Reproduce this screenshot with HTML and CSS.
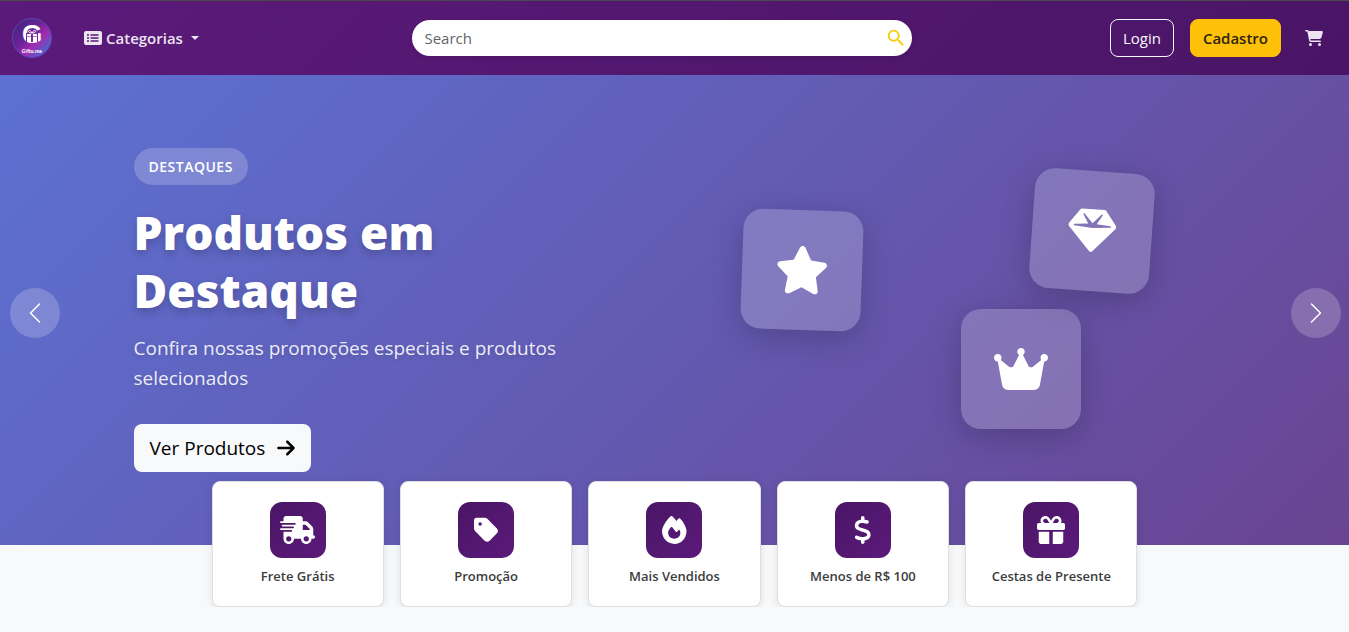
FILE: index.html
```html
<!DOCTYPE html>
<html lang="pt-BR">
<head>
    <meta charset="UTF-8">
    <meta name="viewport" content="width=device-width, initial-scale=1.0">
    <title>Giftu.me</title>
    <link rel="stylesheet" href="styles.css">
</head>
<body>

<header class="navbar">
    <div class="nav-left">
        <a href="#" class="brand" aria-label="Giftu.me">
            <svg viewBox="0 0 40 40" class="logo">
                <defs>
                    <linearGradient id="logoBg" x1="0.1" y1="0.1" x2="0.9" y2="0.9">
                        <stop offset="0" stop-color="#45217f"/>
                        <stop offset="0.4" stop-color="#6a2396"/>
                        <stop offset="0.65" stop-color="#a32cb0"/>
                        <stop offset="0.85" stop-color="#6652c4"/>
                        <stop offset="1" stop-color="#4b6fd6"/>
                    </linearGradient>
                </defs>
                <circle cx="20" cy="20" r="19.5" fill="url(#logoBg)" stroke="#5a48b4"/>
                <text x="20" y="25" class="logo-letter">G</text>
                <!-- gift inside the letter -->
                <path d="M14 15h12v9H14z" fill="#7b2a9f"/>
                <path d="M15 16h4v8h-4zM21 16h4v8h-4z" fill="#fff"/>
                <path d="M15 18.500h10" stroke="#7b2a9f" stroke-width="0.6"/>
                <path d="M20 15c-1-3-4-3-3.500-1.200.2.800 2 1.200 3.500 1.200zM20 15c1-3 4-3 3.500-1.200-.2.800-2 1.200-3.500 1.200z" fill="none" stroke="#fff" stroke-width="1"/>
                <text x="20" y="35" class="logo-name">Giftu.me</text>
            </svg>
        </a>
        <button type="button" class="categories">
            <svg viewBox="0 0 576 512" class="icon-list"><path fill-rule="evenodd" d="M0 96C0 60.700 28.700 32 64 32H512c35.300 0 64 28.700 64 64V416c0 35.300-28.700 64-64 64H64c-35.300 0-64-28.700-64-64V96zM128 288a32 32 0 1 0 0-64 32 32 0 1 0 0 64zm32-128a32 32 0 1 0-64 0 32 32 0 1 0 64 0zM128 384a32 32 0 1 0 0-64 32 32 0 1 0 0 64zm96-248c-13.300 0-24 10.700-24 24s10.700 24 24 24H448c13.300 0 24-10.700 24-24s-10.700-24-24-24H224zm0 96c-13.300 0-24 10.700-24 24s10.700 24 24 24H448c13.300 0 24-10.700 24-24s-10.700-24-24-24H224zm0 96c-13.300 0-24 10.700-24 24s10.700 24 24 24H448c13.300 0 24-10.700 24-24s-10.700-24-24-24H224z"/></svg>
            <span>Categorias</span>
            <span class="caret"></span>
        </button>
    </div>

    <form class="search" role="search">
        <input type="search" class="search-input" placeholder="Search" aria-label="Search">
        <button type="submit" class="search-button" aria-label="Buscar">
            <svg viewBox="0 0 24 24" class="icon-search"><path d="M15.500 14h-.790l-.280-.270A6.471 6.471 0 0 0 16 9.500 6.500 6.500 0 1 0 9.500 16c1.610 0 3.090-.590 4.230-1.570l.270.280v.790l5 4.990L20.490 19l-4.990-5zm-6 0C7.010 14 5 11.990 5 9.500S7.010 5 9.500 5 14 7.010 14 9.500 11.990 14 9.500 14z"/></svg>
        </button>
    </form>

    <nav class="nav-right">
        <a href="#" class="btn btn-outline">Login</a>
        <a href="#" class="btn btn-warning">Cadastro</a>
        <a href="#" class="cart" aria-label="Carrinho">
            <svg viewBox="0 0 576 512" class="icon-cart"><path d="M0 24C0 10.700 10.700 0 24 0H69.500c22 0 41.500 12.800 50.600 32h411c26.300 0 45.500 25 38.600 50.400l-41 152.300c-8.500 31.400-37 53.300-69.500 53.300H170.700l5.400 28.500c2.200 11.300 12.100 19.500 23.600 19.500H488c13.300 0 24 10.700 24 24s-10.700 24-24 24H199.700c-34.600 0-64.300-24.600-70.700-58.500L77.400 54.500c-.7-3.800-4-6.500-7.900-6.500H24C10.700 48 0 37.300 0 24zM128 464a48 48 0 1 1 96 0 48 48 0 1 1-96 0zm336-48a48 48 0 1 1 0 96 48 48 0 1 1 0-96z"/></svg>
        </a>
    </nav>
</header>

<section class="hero">
    <button type="button" class="slide-button slide-prev" aria-label="Anterior">
        <svg viewBox="0 0 16 16" class="icon-chevron"><path d="M11.354 1.646a.5.5 0 0 1 0 .708L5.707 8l5.647 5.646a.5.5 0 0 1-.708.708l-6-6a.5.5 0 0 1 0-.708l6-6a.5.5 0 0 1 .708 0z"/></svg>
    </button>

    <div class="hero-container">
        <div class="hero-text">
            <span class="badge">DESTAQUES</span>
            <h1>Produtos em Destaque</h1>
            <p>Confira nossas promoções especiais e produtos selecionados</p>
            <a href="#" class="hero-button">
                Ver Produtos
                <svg viewBox="0 0 448 512" class="icon-arrow"><path d="M438.600 278.600c12.500-12.500 12.500-32.800 0-45.300l-160-160c-12.500-12.500-32.800-12.500-45.300 0s-12.500 32.800 0 45.300L338.800 224 32 224c-17.700 0-32 14.300-32 32s14.300 32 32 32l306.700 0L233.400 393.400c-12.500 12.500-12.500 32.800 0 45.300s32.800 12.500 45.300 0l160-160z"/></svg>
            </a>
        </div>
        <div class="hero-art">
            <div class="floating floating-star">
                <svg viewBox="0 0 576 512"><path d="M316.900 18C311.600 7 300.400 0 288.100 0s-23.400 7-28.800 18L195 150.300 51.400 171.500c-12 1.800-22 10.200-25.700 21.700s-.7 24.200 7.900 32.700L137.800 329 113.200 474.700c-2 12 3 24.200 12.900 31.300s23 8 33.800 2.300l128.300-68.500 128.300 68.500c10.800 5.700 23.900 4.900 33.800-2.300s14.900-19.300 12.900-31.300L438.500 329 542.700 225.900c8.600-8.500 11.700-21.200 7.900-32.700s-13.700-19.900-25.700-21.700L381.200 150.300 316.900 18z"/></svg>
            </div>
            <div class="floating floating-gem">
                <svg viewBox="0 0 512 512"><path d="M116.700 33.800c4.500-6.100 11.700-9.800 19.300-9.800H376c7.600 0 14.800 3.600 19.300 9.800l112 152c6.800 9.200 6.100 21.900-1.500 30.400l-232 256c-4.500 5-11 7.900-17.800 7.900s-13.200-2.900-17.800-7.900l-232-256c-7.700-8.500-8.300-21.200-1.500-30.400l112-152zm38.500 39.800c-3.300 2.500-4.200 7-2.100 10.500l57.400 95.600L63.300 192c-4.100.3-7.300 3.800-7.300 8s3.200 7.600 7.300 8l192 16c.4 0 .9 0 1.300 0l192-16c4.100-.3 7.300-3.800 7.300-8s-3.200-7.600-7.300-8L301.500 179.800l57.400-95.600c2.100-3.500 1.200-8.100-2.100-10.500s-7.900-2-10.700 1L256 172.200 165.900 74.600c-2.800-3-7.400-3.400-10.700-1z"/></svg>
            </div>
            <div class="floating floating-crown">
                <svg viewBox="0 0 576 512"><path d="M309 106c11.400-7 19-19.700 19-34c0-22.100-17.900-40-40-40s-40 17.900-40 40c0 14.400 7.600 27 19 34L209.700 220.600c-9.100 18.200-32.700 23.400-48.600 10.700L72 160c5-6.700 8-15 8-24c0-22.100-17.900-40-40-40S0 113.900 0 136s17.900 40 40 40c.2 0 .5 0 .7 0L86.400 427.400c5.500 30.400 32 52.600 63 52.600H426.600c30.900 0 57.400-22.100 63-52.600L535.300 176c.2 0 .5 0 .7 0c22.100 0 40-17.900 40-40s-17.900-40-40-40s-40 17.900-40 40c0 9 3 17.300 8 24l-89.100 71.300c-15.900 12.700-39.500 7.500-48.600-10.700L309 106z"/></svg>
            </div>
        </div>
    </div>

    <button type="button" class="slide-button slide-next" aria-label="Próximo">
        <svg viewBox="0 0 16 16" class="icon-chevron"><path d="M4.646 1.646a.5.5 0 0 1 .708 0l6 6a.5.5 0 0 1 0 .708l-6 6a.5.5 0 0 1-.708-.708L10.293 8 4.646 2.354a.5.5 0 0 1 0-.708z"/></svg>
    </button>
</section>

<section class="shortcuts">
    <a href="#" class="shortcut">
        <span class="shortcut-icon">
            <svg viewBox="0 0 640 512"><path d="M112 0C85.500 0 64 21.500 64 48V96H16c-8.800 0-16 7.200-16 16s7.200 16 16 16H64 272c8.800 0 16 7.200 16 16s-7.200 16-16 16H64 48c-8.800 0-16 7.200-16 16s7.200 16 16 16H64 240c8.800 0 16 7.200 16 16s-7.200 16-16 16H64 16c-8.800 0-16 7.200-16 16s7.200 16 16 16H64 208c8.800 0 16 7.200 16 16s-7.200 16-16 16H64V416c0 53 43 96 96 96s96-43 96-96H384c0 53 43 96 96 96s96-43 96-96h32c17.700 0 32-14.300 32-32s-14.300-32-32-32V288 256 237.300c0-17-6.700-33.300-18.700-45.300L512 114.700c-12-12-28.300-18.700-45.300-18.700H416V48c0-26.500-21.500-48-48-48H112zM544 237.300V256H416V160h50.700L544 237.300zM160 368a48 48 0 1 1 0 96 48 48 0 1 1 0-96zm272 48a48 48 0 1 1 96 0 48 48 0 1 1-96 0z"/></svg>
        </span>
        <span class="shortcut-label">Frete Grátis</span>
    </a>
    <a href="#" class="shortcut">
        <span class="shortcut-icon">
            <svg viewBox="0 0 448 512"><path d="M0 80V229.500c0 17 6.700 33.300 18.700 45.300l176 176c25 25 65.500 25 90.500 0L418.700 317.300c25-25 25-65.500 0-90.500l-176-176c-12-12-28.300-18.700-45.300-18.700H48C21.500 32 0 53.500 0 80zm112 32a32 32 0 1 1 0 64 32 32 0 1 1 0-64z"/></svg>
        </span>
        <span class="shortcut-label">Promoção</span>
    </a>
    <a href="#" class="shortcut">
        <span class="shortcut-icon">
            <svg viewBox="0 0 448 512"><path d="M159.300 5.400c7.800-7.300 19.900-7.200 27.700.1c27.600 25.900 53.500 53.800 77.700 84c11-14.400 23.500-30.100 37-42.900c7.900-7.400 20.100-7.400 28 .1c34.600 33 63.900 76.600 84.500 118c20.300 40.800 33.800 82.500 33.800 111.900C448 404.200 348.200 512 224 512C98.400 512 0 404.100 0 276.500c0-38.400 17.800-85.300 45.400-131.700C73.300 97.700 112.700 48.600 159.300 5.400zM225.700 416c25.300 0 47.700-7 68.800-21c42.100-29.400 53.400-88.200 28.100-134.400c-4.500-9-16-9.600-22.500-2l-25.200 29.300c-6.600 7.600-18.500 7.400-24.700-.5c-16.500-21-46-58.500-62.800-79.800c-6.300-8-18.300-8.100-24.700-.1c-33.800 42.500-50.800 69.300-50.800 99.400C112 375.400 162.600 416 225.700 416z"/></svg>
        </span>
        <span class="shortcut-label">Mais Vendidos</span>
    </a>
    <a href="#" class="shortcut">
        <span class="shortcut-icon">
            <svg viewBox="0 0 320 512"><path d="M160 0c17.700 0 32 14.300 32 32V67.700c1.600.2 3.100.4 4.700.7c.4.1.7.1 1.100.2l48 8.800c17.400 3.200 28.900 19.900 25.700 37.200s-19.900 28.900-37.200 25.700l-47.500-8.700c-31.300-4.600-58.900-1.500-78.300 6.200s-27.200 18.300-29 28.100c-2 10.700-.5 16.700 1.200 20.400c1.800 3.900 5.500 8.300 12.800 13.200c16.300 10.700 41.300 17.700 73.700 26.300l2.900.8c28.600 7.600 63.600 16.800 89.600 33.800c14.200 9.300 27.600 21.900 35.900 39.500c8.500 17.900 10.300 37.900 6.400 59.200c-6.900 38-33.100 63.400-65.600 76.700c-13.700 5.600-28.600 9.200-44.400 11V480c0 17.700-14.300 32-32 32s-32-14.300-32-32V445.100c-.4-.1-.9-.1-1.300-.2l-.2 0c-24.400-3.800-64.500-14.300-91.500-26.300c-16.100-7.200-23.400-26.100-16.200-42.200s26.100-23.400 42.200-16.200c20.900 9.300 55.300 18.500 75.200 21.600c31.900 4.700 58.200 2 76-5.300c16.900-6.900 24.600-16.900 26.800-28.900c1.900-10.600.4-16.700-1.300-20.400c-1.900-4-5.600-8.400-13-13.300c-16.400-10.700-41.500-17.700-74-26.300l-2.800-.7C119.400 279.300 84.400 270 58.400 253c-14.200-9.300-27.500-22-35.800-39.600c-8.400-17.900-10.100-37.900-6.100-59.200C23.700 116 52.300 91.200 84.800 78.300c13.300-5.300 27.900-8.900 43.200-11V32c0-17.700 14.300-32 32-32z"/></svg>
        </span>
        <span class="shortcut-label">Menos de R$ 100</span>
    </a>
    <a href="#" class="shortcut">
        <span class="shortcut-icon">
            <svg viewBox="0 0 512 512"><path d="M190.500 68.800L225.300 128H224 152c-22.100 0-40-17.900-40-40s17.900-40 40-40h2.200c14.900 0 28.800 7.900 36.300 20.800zM64 88c0 14.400 3.500 28 9.600 40H32c-17.700 0-32 14.300-32 32v64c0 17.700 14.300 32 32 32H480c17.700 0 32-14.300 32-32V160c0-17.700-14.300-32-32-32H438.400c6.100-12 9.600-25.600 9.600-40c0-48.600-39.400-88-88-88h-2.200c-31.900 0-61.500 16.900-77.700 44.400L256 85.500l-24.100-41C215.700 16.900 186.100 0 154.200 0H152C103.400 0 64 39.400 64 88zm336 0c0 22.100-17.900 40-40 40H288h-1.300l34.800-59.200C329.100 55.900 342.900 48 357.800 48H360c22.100 0 40 17.900 40 40zM32 288V464c0 26.500 21.500 48 48 48H224V288H32zM288 512H432c26.500 0 48-21.500 48-48V288H288V512z"/></svg>
        </span>
        <span class="shortcut-label">Cestas de Presente</span>
    </a>
</section>

</body>
</html>
```
FILE: styles.css
```css
/* General styling */
* {
    box-sizing: border-box;
}

body {
    margin: 0;
    font-family: "Segoe UI", "Open Sans", sans-serif;
    font-size: 15px;
    line-height: 24px;
    color: #212529;
    background-color: #f8f9fb;
}

a {
    text-decoration: none;
    color: inherit;
}

button {
    font: inherit;
    border: none;
    padding: 0;
    background: none;
    cursor: pointer;
}

svg {
    display: block;
    fill: currentColor;
}

/* Navbar */
.navbar {
    display: flex;
    align-items: center;
    justify-content: space-between;
    padding: 17px 12px;
    border-top: 1px solid #4a4a4a;
    background: linear-gradient(135deg, #5b1a7a, #4a1566);
}

.nav-left,
.nav-right {
    display: flex;
    align-items: center;
    gap: 16px;
}

.logo {
    width: 40px;
    height: 40px;
}

.logo-letter {
    font-family: "Liberation Sans", Arial, sans-serif;
    font-size: 26px;
    font-weight: bold;
    text-anchor: middle;
    fill: #fff;
}

.logo-name {
    font-family: "Liberation Sans", Arial, sans-serif;
    font-size: 5px;
    font-weight: bold;
    line-height: 5px;
    text-anchor: middle;
    fill: #fff;
}

.categories {
    display: flex;
    align-items: center;
    gap: 4px;
    padding: 7px 16px;
    font-weight: 600;
    color: #ece4f0;
}

.icon-list {
    width: 18px;
    height: 16px;
}

.caret {
    margin-left: 4px;
    border-top: 4px solid;
    border-left: 4px solid transparent;
    border-right: 4px solid transparent;
}

.search {
    display: flex;
    align-items: center;
    flex: 0 1 500px;
    height: 36px;
    padding: 0 5px 0 12px;
    border-radius: 18px;
    background-color: #fff;
    box-shadow: 0 2px 5px rgba(0, 0, 0, 0.1);
}

.search-input {
    flex: 1;
    min-width: 0;
    padding: 0;
    border: none;
    outline: none;
    background: none;
    font: inherit;
}

.search-input::placeholder {
    color: #5f656b;
    opacity: 1;
}

.search-button {
    color: #f8cc0a;
}

.icon-search {
    width: 22px;
    height: 22px;
}

.btn {
    padding: 6px 12px;
    border: 1px solid;
    border-radius: 8px;
}

.btn-outline {
    color: #f8f9fa;
}

.btn-warning {
    font-weight: 600;
    color: #2b2413;
    background-color: #ffc107;
    border-color: #ffc107;
}

.cart {
    padding: 8px 14px 8px 8px;
    color: #ece4f0;
}

.icon-cart {
    width: 18px;
    height: 16px;
}

/* Hero */
.hero {
    position: relative;
    height: 470px;
    background: linear-gradient(135deg, #5c71d3, #6a4492);
}

.hero-container {
    display: grid;
    grid-template-columns: 1fr 1fr;
    max-width: 1140px;
    height: 100%;
    margin: 0 auto;
    padding: 0 29px;
}

.hero-text {
    max-width: 460px;
    padding-top: 73px;
    color: #fff;
}

.badge {
    display: inline-block;
    margin-bottom: 18px;
    padding: 8px 15px;
    border-radius: 20px;
    font-size: 14px;
    line-height: 21px;
    font-weight: 600;
    letter-spacing: 0.5px;
    vertical-align: top;
    background-color: rgba(255, 255, 255, 0.2);
}

.hero-text h1 {
    margin: 0 0 14px;
    font-size: 46px;
    line-height: 58px;
    font-weight: 800;
    text-shadow: 0 4px 8px rgba(0, 0, 0, 0.2);
}

.hero-text p {
    margin: 0 0 31px;
    font-size: 19px;
    line-height: 30px;
    color: rgba(255, 255, 255, 0.9);
    text-shadow: 0 2px 4px rgba(0, 0, 0, 0.1);
}

.hero-button {
    display: inline-flex;
    align-items: center;
    gap: 12px;
    padding: 9px 16px;
    border-radius: 8px;
    font-size: 19px;
    line-height: 30px;
    color: #000;
    background-color: #f8f9fa;
}

.icon-arrow {
    width: 18px;
    height: 20px;
}

.hero-art {
    position: relative;
}

/* Floating tiles */
.floating {
    position: absolute;
    display: flex;
    align-items: center;
    justify-content: center;
    width: 120px;
    height: 120px;
    border-radius: 20px;
    color: #fff;
    background-color: rgba(255, 255, 255, 0.2);
    box-shadow: 0 8px 32px rgba(0, 0, 0, 0.2);
}

.floating svg {
    height: 48px;
}

.floating-star {
    top: 135px;
    left: 67px;
    transform: rotate(2deg);
}

.floating-gem {
    top: 96px;
    right: 64px;
    transform: rotate(4deg);
}

.floating-crown {
    top: 234px;
    right: 135px;
}

.slide-button {
    position: absolute;
    top: 213px;
    z-index: 1;
    display: flex;
    align-items: center;
    justify-content: center;
    width: 50px;
    height: 50px;
    border-radius: 50%;
    color: #fff;
    background-color: rgba(255, 255, 255, 0.2);
}

.slide-prev {
    left: 10px;
}

.slide-next {
    right: 8px;
}

.icon-chevron {
    width: 24px;
    height: 24px;
}

/* Shortcut cards */
.shortcuts {
    position: relative;
    display: grid;
    grid-template-columns: repeat(5, 1fr);
    gap: 16px;
    max-width: 926px;
    margin: -64px auto 0;
}

.shortcut {
    display: flex;
    flex-direction: column;
    align-items: center;
    gap: 8px;
    padding: 20px 8px;
    border: 1px solid #dfdfe1;
    border-radius: 8px;
    background-color: #fff;
    box-shadow: 0 2px 8px rgba(0, 0, 0, 0.1);
}

.shortcut-icon {
    display: flex;
    align-items: center;
    justify-content: center;
    width: 56px;
    height: 56px;
    border-radius: 12px;
    color: #fff;
    background: linear-gradient(135deg, #4a1566, #5b1a7a);
}

.shortcut-icon svg {
    height: 28px;
}

.shortcut-label {
    font-size: 13px;
    line-height: 20px;
    font-weight: 600;
    color: #3c3c3c;
}
```
